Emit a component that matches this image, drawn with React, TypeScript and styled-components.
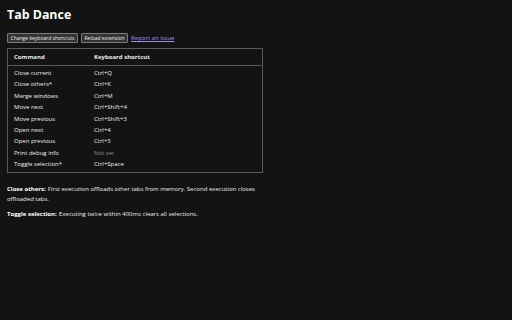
import styled, { createGlobalStyle } from 'styled-components';

type Shortcut = {
  command: string;
  keys: string;
};

const shortcuts: Shortcut[] = [
  { command: 'Close current', keys: 'Ctrl+Q' },
  { command: 'Close others*', keys: 'Ctrl+K' },
  { command: 'Merge windows', keys: 'Ctrl+M' },
  { command: 'Move next', keys: 'Ctrl+Shift+4' },
  { command: 'Move previous', keys: 'Ctrl+Shift+3' },
  { command: 'Open next', keys: 'Ctrl+4' },
  { command: 'Open previous', keys: 'Ctrl+3' },
  { command: 'Print debug info', keys: '' },
  { command: 'Toggle selection*', keys: 'Ctrl+Space' },
];

const GlobalStyle = createGlobalStyle`
  html, body {
    margin: 0;
    padding: 0;
    background: #131313;
  }
  body {
    font-family: 'Open Sans', 'Noto Sans', sans-serif;
    color: #ececec;
    width: 512px;
    height: 320px;
    overflow: hidden;
  }
`;

const Page = styled.div`
  padding: 6px 7px;
  display: flex;
  flex-direction: column;
`;

const Title = styled.h1`
  margin: 0;
  font-size: 12.4px;
  line-height: 18px;
  font-weight: 700;
  color: #ffffff;
`;

const Toolbar = styled.div`
  display: flex;
  align-items: center;
  gap: 3px;
  margin-top: 9px;
`;

const Button = styled.button`
  font-family: inherit;
  font-size: 5px;
  line-height: 6px;
  padding: 1px 2.5px;
  background: #333333;
  color: #f0f0f0;
  border: 0.8px solid #7a7a7a;
  border-radius: 1px;
  cursor: pointer;
`;

const Link = styled.a`
  font-size: 6px;
  line-height: 6px;
  color: #a290e8;
  text-decoration: underline;
  cursor: pointer;
`;

const Table = styled.table`
  margin-top: 5px;
  width: 256px;
  border: 1px solid #5a5a5a;
  border-collapse: collapse;
  font-size: 6px;
`;

const HeadCell = styled.th<{ $wide?: boolean }>`
  text-align: left;
  font-weight: 700;
  font-size: 6px;
  padding: 5px 6px 5px;
  line-height: 6px;
  border-bottom: 1px solid #5a5a5a;
  width: ${(p) => (p.$wide ? 'auto' : '68px')};
`;

const Cell = styled.td<{ $muted?: boolean; $first?: boolean; $last?: boolean }>`
  padding: ${(p) => (p.$first ? '4px' : '2.7px')} 6px ${(p) => (p.$last ? '4.5px' : '2.7px')};
  font-size: 6px;
  line-height: 6px;
  color: ${(p) => (p.$muted ? '#8a8a8a' : '#ececec')};
`;

const Note = styled.p`
  margin: 11px 0 0;
  font-size: 6px;
  line-height: 10px;
  max-width: 256px;
  & + & {
    margin-top: 5px;
  }
`;

const NoteLabel = styled.strong`
  font-size: 6px;
  font-weight: 700;
  color: #ffffff;
  margin-right: 0.6px;
`;

export default function App() {
  return (
    <>
      <GlobalStyle />
      <Page>
        <Title>Tab Dance</Title>
        <Toolbar>
          <Button>Change keyboard shortcuts</Button>
          <Button>Reload extension</Button>
          <Link>Report an issue</Link>
        </Toolbar>
        <Table>
          <thead>
            <tr>
              <HeadCell>Command</HeadCell>
              <HeadCell $wide>Keyboard shortcut</HeadCell>
            </tr>
          </thead>
          <tbody>
            {shortcuts.map((s, i) => (
              <tr key={s.command}>
                <Cell $first={i === 0} $last={i === shortcuts.length - 1}>
                  {s.command}
                </Cell>
                <Cell
                  $muted={!s.keys}
                  $first={i === 0}
                  $last={i === shortcuts.length - 1}
                >
                  {s.keys || 'Not set'}
                </Cell>
              </tr>
            ))}
          </tbody>
        </Table>
        <Note>
          <NoteLabel>Close others:</NoteLabel> First execution offloads other tabs from
          memory. Second execution closes offloaded tabs.
        </Note>
        <Note>
          <NoteLabel>Toggle selection:</NoteLabel> Executing twice within 400ms clears all
          selections.
        </Note>
      </Page>
    </>
  );
}
